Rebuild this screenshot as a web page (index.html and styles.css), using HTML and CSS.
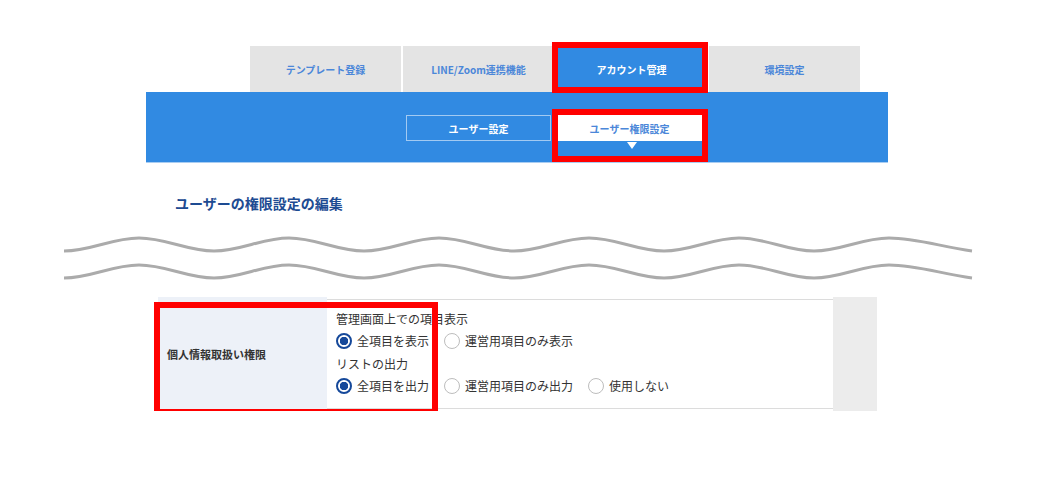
FILE: index.html
```html
<!DOCTYPE html>
<html lang="ja">
<head>
  <meta charset="UTF-8">
  <title>ユーザーの権限設定の編集</title>
  <link rel="stylesheet" href="styles.css">
</head>
<body>

<div class="page">
  <nav class="tabs">
    <a class="tab">テンプレート登録</a>
    <a class="tab">LINE/Zoom連携機能</a>
    <a class="tab active">アカウント管理</a>
    <a class="tab">環境設定</a>
  </nav>

  <div class="subbar">
    <a class="subtab">ユーザー設定</a>
    <a class="subtab current">ユーザー権限設定</a>
  </div>

  <h2 class="heading">ユーザーの権限設定の編集</h2>

  <svg class="wave" viewBox="0 0 912 58" width="912" height="58">
    <path d="M2 22 C29 22 50 9 77 9 S125 22 152 22 S200 9 227 9 S275 22 302 22 S350 9 377 9 S425 22 452 22 S500 9 527 9 S575 22 602 22 S650 9 677 9 S725 22 752 22 S800 9 827 9 S880 18 910 22" />
    <path d="M2 49 C29 49 50 36 77 36 S125 49 152 49 S200 36 227 36 S275 49 302 49 S350 36 377 36 S425 49 452 49 S500 36 527 36 S575 49 602 49 S650 36 677 36 S725 49 752 49 S800 36 827 36 S880 45 910 49" />
  </svg>

  <div class="perm">
    <div class="perm-label">個人情報取扱い権限</div>
    <div class="perm-body">
      <div class="line">管理画面上での項目表示</div>
      <div class="line">
        <label class="opt"><span class="radio on"></span>全項目を表示</label>
        <label class="opt"><span class="radio"></span>運営用項目のみ表示</label>
      </div>
      <div class="line">リストの出力</div>
      <div class="line">
        <label class="opt"><span class="radio on"></span>全項目を出力</label>
        <label class="opt"><span class="radio"></span>運営用項目のみ出力</label>
        <label class="opt"><span class="radio"></span>使用しない</label>
      </div>
    </div>
    <div class="perm-side"></div>
  </div>

  <!-- annotation frames -->
  <div class="mark mark-tab"></div>
  <div class="mark mark-sub"></div>
  <div class="mark mark-row"></div>
</div>

</body>
</html>
```

FILE: styles.css
```css
body {
  margin: 0;
  background: #fff;
  font-family: "Noto Sans CJK JP", "Noto Sans", sans-serif;
  color: #333;
}
.page {
  position: relative;
  width: 1041px;
  padding-top: 46px;
}
.tabs {
  display: flex;
  gap: 2px;
  margin-left: 250px;
}
.tab {
  width: 151px;
  height: 46px;
  display: flex;
  align-items: center;
  justify-content: center;
  background: #e4e4e4;
  color: #4b87d9;
  font-size: 10px;
  font-weight: bold;
}
.tab.active {
  background: #318ae2;
  color: #fff;
}
.subbar {
  margin-left: 146px;
  width: 742px;
  height: 71px;
  box-sizing: border-box;
  padding: 23px 0 0 260px;
  display: flex;
  gap: 6px;
  background: #318ae2;
  border-bottom: 1px solid #a9cdf2;
}
.subtab {
  position: relative;
  width: 145px;
  height: 26px;
  box-sizing: border-box;
  display: flex;
  align-items: center;
  justify-content: center;
  border: 1px solid rgba(255, 255, 255, 0.55);
  color: #fff;
  font-size: 10px;
  font-weight: bold;
}
.subtab.current {
  background: #fff;
  border-color: #fff;
  color: #4b87d9;
}
.subtab.current::after {
  content: "";
  position: absolute;
  left: 69px;
  top: 26px;
  border-left: 5px solid transparent;
  border-right: 5px solid transparent;
  border-top: 7px solid #fff;
}
.heading {
  margin: 30px 0 0 175px;
  font-size: 14px;
  line-height: 20px;
  color: #1d4b92;
}
.wave {
  display: block;
  margin: 16px 0 0 62px;
  fill: none;
  stroke: #ababab;
  stroke-width: 3;
}
.perm {
  display: grid;
  grid-template-columns: 169px 506px 44px;
  height: 114px;
  margin: 10px 0 0 158px;
}
.perm-label {
  display: flex;
  align-items: center;
  padding-left: 9px;
  background: #edf1f8;
  font-size: 11px;
  font-weight: bold;
}
.perm-body {
  margin: 2px 0;
  padding: 7px 0 0 9px;
  border-top: 1px solid #dcdcdc;
  border-bottom: 1px solid #dcdcdc;
  font-size: 12px;
}
.line {
  display: flex;
  align-items: center;
  height: 22.5px;
}
.opt {
  display: flex;
  align-items: center;
  gap: 5px;
  margin-right: 15px;
}
.radio {
  width: 16px;
  height: 16px;
  box-sizing: border-box;
  border: 1px solid #bdbdbd;
  border-radius: 50%;
  background: #fff;
}
.radio.on {
  border: 2px solid #15489a;
  background: radial-gradient(circle, #15489a 0 4px, #fff 4.5px);
}
.perm-side {
  background: #ececec;
}
.mark {
  position: absolute;
  box-sizing: border-box;
  border: 6px solid #ff0000;
}
.mark-tab {
  left: 552px;
  top: 42px;
  width: 156px;
  height: 51px;
}
.mark-sub {
  left: 552px;
  top: 109px;
  width: 156px;
  height: 53px;
}
.mark-row {
  left: 154px;
  top: 302px;
  width: 284px;
  height: 113px;
}
```
